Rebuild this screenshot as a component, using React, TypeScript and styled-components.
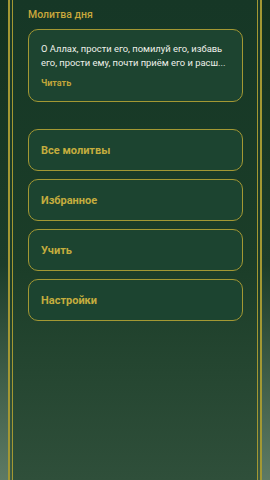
import styled, { createGlobalStyle } from "styled-components";

const GlobalStyle = createGlobalStyle`
  html, body {
    margin: 0;
    padding: 0;
    height: 100%;
  }
  body {
    font-family: Roboto, "Noto Sans", "Liberation Sans", sans-serif;
    background: #173826;
  }
`;

const App = () => {
  return (
    <>
      <GlobalStyle />
      <Page>
        <Frame>
          <Inner>
            <Heading>Молитва дня</Heading>
            <DailyCard>
              <DailyText>
                О Аллах, прости его, помилуй его, избавь его, прости ему, почти
                приём его и расш...
              </DailyText>
              <ReadLink>Читать</ReadLink>
            </DailyCard>
            <Menu>
              {menuItems.map((item) => (
                <MenuButton key={item}>{item}</MenuButton>
              ))}
            </Menu>
          </Inner>
        </Frame>
      </Page>
    </>
  );
};

export default App;

const menuItems = ["Все молитвы", "Избранное", "Учить", "Настройки"];

const gold = "#a39833";

const Page = styled.div`
  width: 270px;
  height: 480px;
  box-sizing: border-box;
  padding: 0 8px;
  background: linear-gradient(180deg, #14321f 0%, #1c3d2a 55%, #5d7a64 100%);
`;

const Frame = styled.div`
  height: 100%;
  box-sizing: border-box;
  border-left: 2px solid ${gold};
  border-right: 2px solid ${gold};
  padding: 0 2px;
  background: linear-gradient(180deg, #17382a 0%, #1b3c29 60%, #3b5a45 100%);
`;

const Inner = styled.div`
  height: 100%;
  box-sizing: border-box;
  border-left: 1.5px solid ${gold};
  border-right: 1.5px solid ${gold};
  padding: 8px 14.5px 0 15px;
  background: linear-gradient(180deg, #163726 0%, #1b3d28 55%, #2f4f3a 100%);
  display: flex;
  flex-direction: column;
`;

const Heading = styled.div`
  color: #c9a83c;
  font-size: 10.5px;
  font-weight: 500;
  line-height: 14px;
  margin-bottom: 7px;
`;

const DailyCard = styled.div`
  border: 1px solid ${gold};
  border-radius: 10px;
  background: #1d4430;
  padding: 12px 12px 12px;
`;

const DailyText = styled.div`
  color: #eef0ea;
  font-size: 9.4px;
  line-height: 13.5px;
`;

const ReadLink = styled.div`
  color: #c2a63a;
  font-size: 9px;
  font-weight: 700;
  line-height: 12px;
  margin-top: 8px;
`;

const Menu = styled.div`
  display: flex;
  flex-direction: column;
  gap: 8px;
  margin-top: 27px;
`;

const MenuButton = styled.div`
  height: 42px;
  box-sizing: border-box;
  border: 1px solid ${gold};
  border-radius: 10px;
  background: #1c4430;
  display: flex;
  align-items: center;
  padding: 0 12px;
  color: #c4ad3e;
  font-size: 11px;
  font-weight: 700;
`;
